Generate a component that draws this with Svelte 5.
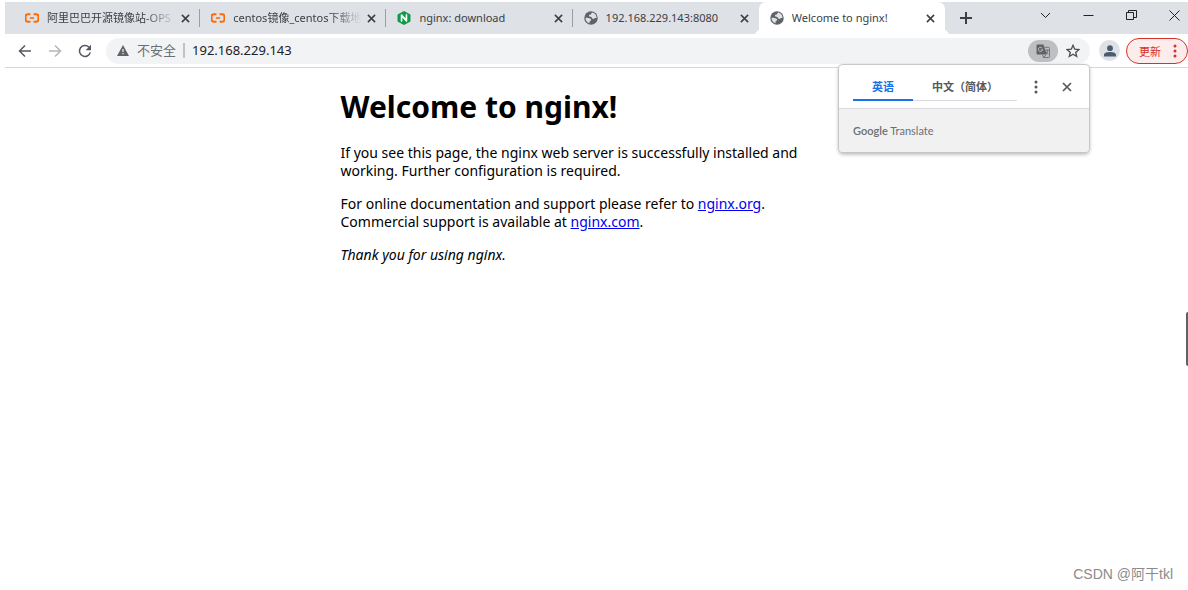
<script lang="ts">
	// Browser window with the default nginx page and the translate popup open.
	type Icon = 'aliyun' | 'nginx' | 'globe';
	type Tab = { title: string; icon: Icon; fade?: boolean };

	const tabs: Tab[] = [
		{ title: '阿里巴巴开源镜像站-OPS', icon: 'aliyun', fade: true },
		{ title: 'centos镜像_centos下载地', icon: 'aliyun', fade: true },
		{ title: 'nginx: download', icon: 'nginx' },
		{ title: '192.168.229.143:8080', icon: 'globe' },
		{ title: 'Welcome to nginx!', icon: 'globe' }
	];

	let active = $state(4);
	let address = $state('192.168.229.143');
	let lang = $state('en');
	let popupOpen = $state(true);
</script>

{#snippet cross(size: number)}
	<svg width={size} height={size} viewBox="0 0 10 10" aria-hidden="true">
		<path d="M1 1l8 8M9 1l-8 8" fill="none" stroke="currentColor" stroke-width="1.7" />
	</svg>
{/snippet}

{#snippet favicon(icon: Icon)}
	<svg class="favicon" viewBox="0 0 16 16" aria-hidden="true">
		{#if icon === 'aliyun'}
			<g fill="none" stroke="#ff6a00" stroke-width="2.2">
				<path d="M6.200 3.800H3.200Q.7 3.800.7 6v4q0 2.200 2.500 2.200h3" />
				<path d="M9.800 3.800h3q2.500 0 2.500 2.200v4q0 2.200-2.500 2.200h-3" />
				<path d="M5.600 8h4.800" stroke-width="1.800" />
			</g>
		{:else if icon === 'nginx'}
			<path d="M8 0l7.400 4v8L8 16 .6 12V4z" fill="#109a48" />
			<path d="M5.200 11.500V4.700l5.600 6.600V4.500" fill="none" stroke="#fff" stroke-width="1.900" stroke-linejoin="round" stroke-linecap="round" />
		{:else}
			<circle cx="8" cy="8" r="7.700" fill="#5f6368" />
			<path d="M9.600 1.800C8.300 2.100 8.700 3.400 7.700 3.900 6.800 4.300 5.700 4 5.700 5.200c0 1.200.9 1.500 2 1.500 1.300 0 1.100 1.300 1.800 2 .8.700 1.900.4 2.600-.3.700-.6 1.500-.4 2.200-.3C14.600 4.900 12.400 2.400 9.600 1.800z" class="land" />
			<path d="M1.700 7.800c2 .2 4.400 0 5.800 1.100 1.100.9.800 2-.2 2.300-1 .2-1 1-.9 2.900C3.400 13.400 1.600 10.700 1.700 7.800z" class="land" />
		{/if}
	</svg>
{/snippet}

<div class="window">
	<header class="strip">
		<div class="tabs">
			{#each tabs as tab, i}
				<div class="tab" class:active={i === active} class:before={i === active - 1}>
					<button type="button" class="pick" onclick={() => (active = i)}>
						{@render favicon(tab.icon)}
						<span class="title" class:fade={tab.fade}>{tab.title}</span>
					</button>
					<button type="button" class="close" aria-label="Close tab">{@render cross(9)}</button>
				</div>
			{/each}
		</div>
		<button type="button" class="new" aria-label="New tab">
			<svg width="12" height="12" viewBox="0 0 12 12"><path d="M6 0v12M0 6h12" stroke="currentColor" stroke-width="2" /></svg>
		</button>
		<div class="controls">
			<button type="button" aria-label="Search tabs">
				<svg width="11" height="11" viewBox="0 0 11 11"><path d="M1 3l4.500 4.500L10 3" /></svg>
			</button>
			<button type="button" aria-label="Minimize">
				<svg width="11" height="11" viewBox="0 0 11 11"><path d="M0.500 5.500h10" /></svg>
			</button>
			<button type="button" aria-label="Restore">
				<svg width="11" height="11" viewBox="0 0 11 11"><path d="M.5 2.500h7v7h-7zM2.500 2.500v-2h8v7h-3" /></svg>
			</button>
			<button type="button" aria-label="Close">
				<svg width="11" height="11" viewBox="0 0 11 11"><path d="M.5.500l10 10M10.500.500l-10 10" /></svg>
			</button>
		</div>
	</header>

	<div class="toolbar">
		<button type="button" class="nav" aria-label="Back">
			<svg width="14" height="14" viewBox="0 0 14 14"><path d="M13 7H2M7 1.500L1.500 7 7 12.500" /></svg>
		</button>
		<button type="button" class="nav off" aria-label="Forward" disabled>
			<svg width="14" height="14" viewBox="0 0 14 14"><path d="M1 7h11M7 1.500L12.500 7 7 12.500" /></svg>
		</button>
		<button type="button" class="nav" aria-label="Reload">
			<svg width="14" height="14" viewBox="0 0 14 14">
				<path d="M12.300 8.400A5.500 5.500 0 1 1 10.900 3.100" />
				<path d="M13 .8v5.400H7.600z" fill="currentColor" stroke="none" />
			</svg>
		</button>
		<div class="omnibox">
			<svg class="warn" width="12" height="11" viewBox="0 0 12 11" aria-hidden="true">
				<path d="M6 0l6 11H0z" fill="#5f6368" />
				<path d="M6 4v3M6 8v1.300" stroke="#f1f3f4" stroke-width="1.200" />
			</svg>
			<span class="unsafe">不安全</span>
			<input type="text" aria-label="Address" bind:value={address} />
			<button type="button" class="translate" aria-label="Translate this page" onclick={() => (popupOpen = !popupOpen)}>
				<svg width="14" height="14" viewBox="0 0 14 14">
					<path d="M1.500.500h6l3.200 10H1.500a1 1 0 0 1-1-1v-8a1 1 0 0 1 1-1z" fill="#5f6368" />
					<path d="M6.300 4.200A2.100 2.100 0 1 0 6.600 5.800H4.800" fill="none" stroke="#bfc1c4" />
					<path d="M8.600 3.300h3.900a1 1 0 0 1 1 1v8.200a1 1 0 0 1-1 1H7.500l-1-3M7.500 13.500l2.800-3" fill="none" stroke="#5f6368" stroke-width=".8" />
					<path d="M9.200 6.300h3.600M10.900 5.300v1M12.200 6.300q-.6 2.200-2.200 3.600M10 7.500q.8 1.600 2.400 2.600" fill="none" stroke="#5f6368" stroke-width=".8" />
				</svg>
			</button>
			<button type="button" class="star" aria-label="Bookmark this page">
				<svg width="14" height="14" viewBox="0 0 14 14">
					<path d="M7 1.300l1.700 3.900 4.200.4-3.200 2.800 1 4.100L7 10.300l-3.700 2.200 1-4.100L1.100 5.600l4.200-.4z" fill="none" stroke="#4a4e53" stroke-width="1.300" />
				</svg>
			</button>
		</div>
		<button type="button" class="avatar" aria-label="Profile">
			<svg width="12" height="12" viewBox="0 0 12 12">
				<circle cx="6" cy="3.200" r="2.900" fill="#4d5b70" />
				<path d="M0 11.500V9.600C0 7.700 3.500 7 6 7s6 .7 6 2.600v1.900z" fill="#4d5b70" />
			</svg>
		</button>
		<button type="button" class="update">
			更新
			<svg width="4" height="14" viewBox="0 0 4 14" aria-hidden="true">
				<circle cx="2" cy="2" r="1.500" /><circle cx="2" cy="7" r="1.500" /><circle cx="2" cy="12" r="1.500" />
			</svg>
		</button>
	</div>

	<main>
		<h1>Welcome to nginx!</h1>
		<p>
			If you see this page, the nginx web server is successfully installed and
			working. Further configuration is required.
		</p>
		<p>
			For online documentation and support please refer to
			<a href="http://nginx.org/">nginx.org</a>.<br />
			Commercial support is available at
			<a href="http://nginx.com/">nginx.com</a>.
		</p>
		<p><em>Thank you for using nginx.</em></p>
	</main>

	{#if popupOpen}
		<section class="popup" aria-label="Google Translate">
			<div class="top">
				<div class="langs">
					<button type="button" class:on={lang === 'en'} onclick={() => (lang = 'en')}>英语</button>
					<button type="button" class:on={lang === 'zh'} onclick={() => (lang = 'zh')}>中文（简体）</button>
				</div>
				<button type="button" class="more" aria-label="Options">
					<svg width="4" height="14" viewBox="0 0 4 14">
						<circle cx="2" cy="2" r="1.500" /><circle cx="2" cy="7" r="1.500" /><circle cx="2" cy="12" r="1.500" />
					</svg>
				</button>
				<button type="button" class="dismiss" aria-label="Close" onclick={() => (popupOpen = false)}>{@render cross(10)}</button>
			</div>
			<div class="brand"><b>Google</b> Translate</div>
		</section>
	{/if}

	<div class="edge"></div>
	<div class="watermark">CSDN @阿干tkl</div>
</div>

<style>
	:global(body) {
		background: #fff;
	}
	.window {
		position: relative;
		min-height: 100vh;
		box-sizing: border-box;
		padding: 2px 0 0 5px;
		overflow: hidden;
		font-family: "Noto Sans", "Noto Sans CJK SC", sans-serif;
		font-size: 11px;
		color: #3c4043;
	}
	button {
		display: flex;
		align-items: center;
		justify-content: center;
		padding: 0;
		border: 0;
		background: none;
		font: inherit;
		color: inherit;
	}
	svg {
		display: block;
		flex-shrink: 0;
	}

	/* tab strip */
	.strip {
		display: flex;
		height: 32px;
		padding-left: 9px;
		background: #dee1e6;
	}
	.tabs {
		display: flex;
		flex: 0 1 931px;
		min-width: 0;
	}
	.tab {
		position: relative;
		display: flex;
		flex: 1 1 0;
		align-items: center;
		min-width: 0;
		padding: 0 10px 0 11px;
	}
	.tab:not(.active, .before)::after {
		content: "";
		position: absolute;
		right: 0;
		top: 7px;
		width: 1px;
		height: 18px;
		background: #9b9ea3;
	}
	.tab.active {
		border-radius: 7px 7px 0 0;
		background: #fff;
	}
	.tab.active::before,
	.tab.active::after {
		content: "";
		position: absolute;
		bottom: 0;
		width: 7px;
		height: 7px;
	}
	.tab.active::before {
		right: 100%;
		background: radial-gradient(circle at 0 0, #dee1e6 7px, #fff 7px);
	}
	.tab.active::after {
		left: 100%;
		background: radial-gradient(circle at 100% 0, #dee1e6 7px, #fff 7px);
	}
	.pick {
		flex: 1;
		gap: 8px;
		min-width: 0;
		height: 100%;
		justify-content: flex-start;
	}
	.favicon {
		width: 14px;
		height: 14px;
	}
	.land {
		fill: #dee1e6;
	}
	.title {
		flex: 1;
		overflow: hidden;
		white-space: nowrap;
		text-align: left;
		line-height: 18px;
	}
	.title.fade {
		mask-image: linear-gradient(to right, #000 75%, transparent);
	}
	.close {
		width: 14px;
		height: 20px;
		justify-content: flex-end;
	}
	.new {
		width: 42px;
	}
	.controls {
		display: flex;
		margin-left: auto;
		height: 27px;
	}
	.controls button {
		width: 43px;
	}
	.controls button:last-child {
		margin-right: -8px;
	}
	.controls path {
		fill: none;
		stroke: #222;
	}

	/* toolbar */
	.toolbar {
		display: flex;
		align-items: center;
		height: 33px;
		padding-left: 5px;
		border-bottom: 1px solid #d5d7da;
	}
	.nav {
		width: 30px;
		height: 26px;
		color: #54585d;
	}
	.nav.off {
		color: #b4b6b9;
	}
	.nav path {
		fill: none;
		stroke: currentColor;
		stroke-width: 1.5;
	}
	.nav path[fill] {
		fill: currentColor;
		stroke: none;
	}
	.omnibox {
		display: flex;
		align-items: center;
		flex: 1;
		height: 26px;
		margin: 0 9px 0 6px;
		padding: 0 10px 0 11px;
		border-radius: 13px;
		background: #f1f3f4;
	}
	.unsafe {
		margin-left: 8px;
		padding-right: 7px;
		border-right: 2px solid #c0c2c5;
		font-size: 13px;
		line-height: 15px;
		color: #6b6f74;
	}
	.omnibox input {
		flex: 1;
		min-width: 0;
		padding: 0 0 2px 7px;
		border: 0;
		outline: 0;
		background: none;
		font: inherit;
		font-size: 13px;
		color: #202124;
	}
	.translate {
		width: 30px;
		height: 22px;
		border-radius: 11px;
		background: #bdbfc1;
	}
	.star {
		margin-left: 8px;
	}
	.avatar {
		width: 21px;
		height: 21px;
		border-radius: 50%;
		background: #dee1e6;
	}
	.update {
		gap: 12px;
		width: 62px;
		height: 26px;
		margin-left: 6px;
		padding-left: 2px;
		border: 1px solid #d5302a;
		border-radius: 13px;
		background: #fceceb;
		color: #d5302a;
	}
	.update circle {
		fill: #d5302a;
	}

	/* page */
	main {
		max-width: 512px;
		margin: 0 auto;
		font-size: 14px;
		line-height: 18px;
		color: #000;
	}
	h1 {
		margin: 20px 0 18px;
		font-size: 30px;
		line-height: 38px;
	}
	p {
		margin: 15px 0;
	}
	a {
		color: #00e;
	}

	/* translate popup, hangs from the omnibox */
	.popup {
		position: absolute;
		top: 65px;
		right: 99px;
		width: 250px;
		border-radius: 4px;
		background: #fff;
		box-shadow: 0 0 1px 1px #c4c6c8, 0 2px 4px #0005;
		overflow: hidden;
	}
	.top {
		display: flex;
		align-items: center;
		height: 43px;
		padding: 0 18px 0 14px;
		border-bottom: 1px solid #dadce0;
		color: #54585d;
	}
	.langs {
		display: flex;
		align-self: flex-end;
		flex: 1;
		height: 28px;
		margin-bottom: 7px;
		box-shadow: inset 0 -1px #dadce0;
	}
	.langs button {
		padding: 0 19px;
		border-bottom: 2px solid transparent;
		font-weight: 700;
		white-space: nowrap;
	}
	.langs .on {
		border-color: #1a73e8;
		color: #1a73e8;
	}
	.more {
		margin-left: 17px;
	}
	.more circle {
		fill: #54585d;
	}
	.dismiss {
		margin-left: 24px;
	}
	.brand {
		padding: 0 14px;
		background: #f1f1f1;
		font-family: Lato, sans-serif;
		line-height: 43px;
		color: #6b6f74;
	}
	.brand b {
		font-weight: 600;
	}

	.edge {
		position: absolute;
		right: 0;
		top: 312px;
		width: 2px;
		height: 54px;
		border-radius: 2px 0 0 2px;
		background: #5d6268;
	}
	.watermark {
		position: absolute;
		right: 15px;
		bottom: 6px;
		font-family: "Liberation Sans", "Noto Sans CJK SC", sans-serif;
		font-size: 14px;
		line-height: 20px;
		color: #8b8b8b;
	}
</style>
